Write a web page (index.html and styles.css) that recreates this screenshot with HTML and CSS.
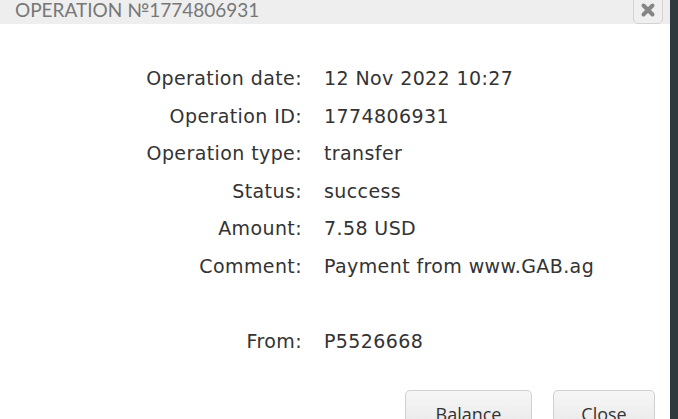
FILE: index.html
```html
<!DOCTYPE html>
<html>
<head>
<meta charset="utf-8">
<link rel="stylesheet" href="styles.css">
</head>
<body>
<div class="page">
  <div class="modal">
    <div class="header">
      <div class="title">OPERATION №1774806931</div>
      <button class="x-btn" aria-label="close">
        <svg width="16" height="16" viewBox="0 0 16 16"><path d="M3.5 3.5 L12.5 12.5 M12.5 3.5 L3.5 12.5" stroke="#858585" stroke-width="4" stroke-linecap="round"/></svg>
      </button>
    </div>
    <div class="body">
      <div class="grid">
        <div class="lbl">Operation date:</div><div class="val">12 Nov 2022 10:27</div>
        <div class="lbl">Operation ID:</div><div class="val">1774806931</div>
        <div class="lbl">Operation type:</div><div class="val">transfer</div>
        <div class="lbl">Status:</div><div class="val">success</div>
        <div class="lbl">Amount:</div><div class="val">7.58 USD</div>
        <div class="lbl">Comment:</div><div class="val">Payment from www.GAB.ag</div>
        <div class="lbl">&nbsp;</div><div class="val">&nbsp;</div>
        <div class="lbl">From:</div><div class="val">P5526668</div>
      </div>
      <div class="actions">
        <button class="btn">Balance</button>
        <button class="btn">Close</button>
      </div>
    </div>
  </div>
  <div class="strip"></div>
</div>
</body>
</html>
```
FILE: styles.css
```css
html, body {
  margin: 0;
  padding: 0;
  height: 100%;
  overflow: hidden;
}
.page {
  display: flex;
  height: 419px;
  background: #fff;
}
.modal {
  flex: 1;
  display: flex;
  flex-direction: column;
  background: #fff;
}
.strip {
  width: 8px;
  background: #2f3a3f;
}
.header {
  height: 36px;
  background: #eeeeee;
  display: flex;
  justify-content: space-between;
  align-items: flex-start;
  padding: 0 7px 0 15px;
}
.title {
  font-family: "Lato", sans-serif;
  font-size: 19px;
  letter-spacing: 0;
  color: #777;
  line-height: 20px;
  margin-top: 0;
}
.x-btn {
  width: 30px;
  height: 31px;
  margin-top: -7px;
  border: 1px solid #d2d2d2;
  border-radius: 5px;
  background: #efefef;
  display: flex;
  align-items: flex-end;
  justify-content: center;
  padding: 0 0 5px 0;
}
.body {
  flex: 1;
  display: flex;
  flex-direction: column;
  padding-top: 36px;
}
.grid {
  display: grid;
  grid-template-columns: 302px 1fr;
  column-gap: 22px;
  row-gap: 0;
  font-family: "DejaVu Sans", sans-serif;
  font-size: 19px;
  letter-spacing: 0.4px;
  color: #333;
}
.lbl, .val {
  height: 37.5px;
  line-height: 37.5px;
}
.lbl {
  text-align: right;
}
.actions {
  display: flex;
  justify-content: flex-end;
  gap: 21px;
  padding: 0 15px 0 0;
  margin-top: 30px;
}
.btn {
  font-family: "Open Sans", sans-serif;
  font-size: 18px;
  color: #333;
  border: 1px solid #cfcfcf;
  border-radius: 5px;
  background: linear-gradient(#f6f6f6, #e9e9e9);
  height: 40px;
  padding: 8px 0 0 0;
  line-height: 24px;
  align-self: flex-start;
}
.btn:first-child {
  width: 127px;
}
.btn:last-child {
  width: 102px;
}
```
